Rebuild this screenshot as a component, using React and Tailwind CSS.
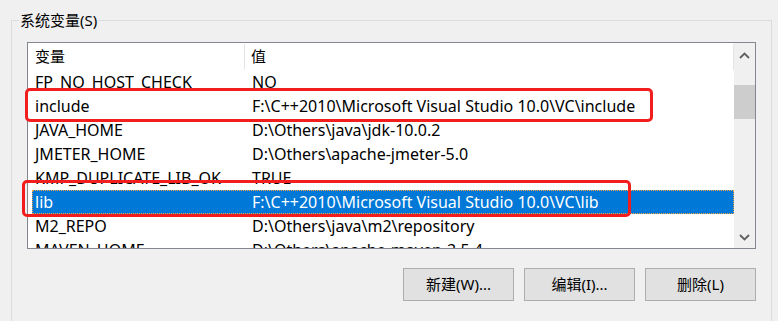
const rows = [
  { name: "FP_NO_HOST_CHECK", value: "NO" },
  { name: "include", value: "F:\\C++2010\\Microsoft Visual Studio 10.0\\VC\\include" },
  { name: "JAVA_HOME", value: "D:\\Others\\java\\jdk-10.0.2" },
  { name: "JMETER_HOME", value: "D:\\Others\\apache-jmeter-5.0" },
  { name: "KMP_DUPLICATE_LIB_OK", value: "TRUE" },
  { name: "lib", value: "F:\\C++2010\\Microsoft Visual Studio 10.0\\VC\\lib", selected: true },
  { name: "M2_REPO", value: "D:\\Others\\java\\m2\\repository" },
  { name: "MAVEN_HOME", value: "D:\\Others\\apache-maven-3.5.4" },
];

function Chevron({ up }) {
  return (
    <svg width="11" height="7" viewBox="0 0 11 7" fill="none">
      <path
        d={up ? "M1 6 L5.5 1.5 L10 6" : "M1 1 L5.5 5.5 L10 1"}
        stroke="#606060"
        strokeWidth="1.8"
      />
    </svg>
  );
}

function Button({ children }) {
  return (
    <button className="flex h-[33px] w-[111px] items-center justify-center border border-[#adadad] bg-[#e1e1e1] text-[15px] text-black">
      {children}
    </button>
  );
}

export default function App() {
  return (
    <div className="h-[321px] w-[778px] overflow-hidden bg-[#f0f0f0] pl-[11px] pt-[20px] font-['Segoe_UI','Noto_Sans','Noto_Sans_CJK_SC',sans-serif] text-black">
      <div className="relative h-[320px] w-[761px] border-l border-r border-t border-[#dcdcdc] pl-[15px] pt-[21px]">
        <span className="absolute -top-[11px] left-[7px] bg-[#f0f0f0] px-[1px] text-[15px] leading-[20px]">
          系统变量(S)
        </span>

        <div className="flex h-[207px] w-[729px] border border-[#828790] bg-white">
          <div className="flex flex-1 flex-col overflow-hidden">
            <div className="flex h-[27px] shrink-0 items-center text-[15px]">
              <div className="flex h-[26px] w-[217px] items-center border-r border-[#e5e5e5] pl-[7px]">
                变量
              </div>
              <div className="flex h-[26px] flex-1 items-center border-r border-[#e5e5e5] pl-[6px]">
                值
              </div>
            </div>
            {rows.map((row) => (
              <div
                key={row.name}
                className={
                  row.selected
                    ? "ml-[4px] flex h-[24px] shrink-0 items-center bg-[#0078d7] text-[16px] text-white outline-1 -outline-offset-1 outline-dotted outline-[#f7a343]"
                    : "ml-[4px] flex h-[24px] shrink-0 items-center text-[16px]"
                }
              >
                <div className="w-[213px] whitespace-nowrap pl-[3px]">{row.name}</div>
                <div className="flex-1 whitespace-nowrap pl-[7px]">{row.value}</div>
              </div>
            ))}
          </div>

          <div className="flex w-[21px] flex-col bg-[#f0f0f0]">
            <div className="flex h-[24px] items-center justify-center">
              <Chevron up />
            </div>
            <div className="mt-[18px] h-[34px] bg-[#cdcdcd]" />
            <div className="flex-1" />
            <div className="flex h-[22px] items-center justify-center">
              <Chevron />
            </div>
          </div>
        </div>

        <div className="mt-[19px] flex w-[729px] justify-end gap-[10px]">
          <Button>新建(W)...</Button>
          <Button>编辑(I)...</Button>
          <Button>删除(L)</Button>
        </div>

        {/* red annotation boxes */}
        <div className="absolute left-[13px] top-[67px] h-[34px] w-[628px] rounded-[5px] border-[3px] border-[#f21d1d]" />
        <div className="absolute left-[10px] top-[159px] h-[37px] w-[609px] rounded-[5px] border-[3px] border-[#f21d1d]" />
      </div>
    </div>
  );
}
